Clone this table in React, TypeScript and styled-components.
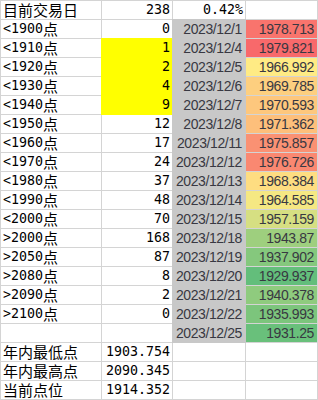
import React from 'react';
import styled, { createGlobalStyle, css } from 'styled-components';

const GRID = '#d4d4d4';
const GRAY = '#c8c8c8';
const YELLOW = '#ffff00';

type Row = { label: string; count: string; date: string; value: string; mark?: boolean };

const rows: Row[] = [
	{ label: '<1900点', count: '0', date: '2023/12/1', value: '1978.713' },
	{ label: '<1910点', count: '1', date: '2023/12/4', value: '1979.821', mark: true },
	{ label: '<1920点', count: '2', date: '2023/12/5', value: '1966.992', mark: true },
	{ label: '<1930点', count: '4', date: '2023/12/6', value: '1969.785', mark: true },
	{ label: '<1940点', count: '9', date: '2023/12/7', value: '1970.593', mark: true },
	{ label: '<1950点', count: '12', date: '2023/12/8', value: '1971.362' },
	{ label: '<1960点', count: '17', date: '2023/12/11', value: '1975.857' },
	{ label: '<1970点', count: '24', date: '2023/12/12', value: '1976.726' },
	{ label: '<1980点', count: '37', date: '2023/12/13', value: '1968.384' },
	{ label: '<1990点', count: '48', date: '2023/12/14', value: '1964.585' },
	{ label: '<2000点', count: '70', date: '2023/12/15', value: '1957.159' },
	{ label: '>2000点', count: '168', date: '2023/12/18', value: '1943.87' },
	{ label: '>2050点', count: '87', date: '2023/12/19', value: '1937.902' },
	{ label: '>2080点', count: '8', date: '2023/12/20', value: '1929.937' },
	{ label: '>2090点', count: '2', date: '2023/12/21', value: '1940.378' },
	{ label: '>2100点', count: '0', date: '2023/12/22', value: '1935.993' },
	{ label: '', count: '', date: '2023/12/25', value: '1931.25' },
];

const summary = [
	{ label: '年内最低点', value: '1903.754' },
	{ label: '年内最高点', value: '2090.345' },
	{ label: '当前点位', value: '1914.352' },
];

// excel 3色阶: 最小绿 / 中位数黄 / 最大红
const nums = rows.map((r) => parseFloat(r.value));
const sorted = [...nums].sort((a, b) => a - b);
const min = sorted[0];
const max = sorted[sorted.length - 1];
const mid = sorted[Math.floor(sorted.length / 2)];

const mix = (a: number[], b: number[], t: number) =>
	`rgb(${a.map((v, i) => Math.round(v + (b[i] - v) * t)).join(',')})`;

function scaleColor(v: number): string {
	const green = [99, 190, 123];
	const yellow = [255, 235, 132];
	const red = [248, 105, 107];
	if (v <= mid) return mix(green, yellow, (v - min) / (mid - min));
	return mix(yellow, red, (v - mid) / (max - mid));
}

// 拆开汉字和半角字符, 各用各的字体
function MixedText({ text }: { text: string }) {
	const parts = text.match(/[\u4e00-\u9fff]+|[^\u4e00-\u9fff]+/g) ?? [];
	return (
		<>
			{parts.map((p, i) => (/[\u4e00-\u9fff]/.test(p) ? <Han key={i}>{p}</Han> : <span key={i}>{p}</span>))}
		</>
	);
}

export default function App(): JSX.Element {
	return (
		<>
			<GlobalStyle />
			<Sheet>
				<Cell>
					<MixedText text="目前交易日" />
				</Cell>
				<Cell $align="right">238</Cell>
				<Cell $align="right">0.42%</Cell>
				<Cell />

				{rows.map((r) => (
					<React.Fragment key={r.date}>
						<Cell>
							<MixedText text={r.label} />
						</Cell>
						<Cell $align="right" $fill={r.mark ? YELLOW : undefined}>
							{r.count}
						</Cell>
						<Cell $align="right" $font="sans" $fill={GRAY}>
							{r.date}
						</Cell>
						<Cell $align="right" $font="sans" style={{ background: scaleColor(parseFloat(r.value)) }}>
							{r.value}
						</Cell>
					</React.Fragment>
				))}

				{summary.map((s) => (
					<React.Fragment key={s.label}>
						<Cell>
							<MixedText text={s.label} />
						</Cell>
						<Cell $align="right">{s.value}</Cell>
						<Cell />
						<Cell />
					</React.Fragment>
				))}
			</Sheet>
		</>
	);
}

const GlobalStyle = createGlobalStyle`
	html, body {
		margin: 0;
		padding: 0;
		background: #fff;
	}
`;

const Sheet = styled.div`
	display: grid;
	grid-template-columns: 101px 71px 73px 72px;
	grid-auto-rows: 19px;
	width: 318px;
	border-left: 1px solid ${GRID};
	border-top: 1px solid ${GRID};
	box-sizing: border-box;
`;

const Cell = styled.div<{ $align?: 'left' | 'right'; $fill?: string; $font?: 'mono' | 'sans' }>`
	box-sizing: border-box;
	display: flex;
	align-items: flex-end;
	justify-content: ${(p) => (p.$align === 'right' ? 'flex-end' : 'flex-start')};
	padding: 0 2px 1px 2px;
	border-right: 1px solid ${(p) => p.$fill ?? GRID};
	border-bottom: 1px solid ${(p) => p.$fill ?? GRID};
	background: ${(p) => p.$fill ?? '#fff'};
	white-space: nowrap;
	overflow: visible;
	${(p) =>
		p.$fill &&
		css`
			box-shadow: -1px -1px 0 ${p.$fill}, 0 -1px 0 ${p.$fill}, -1px 0 0 ${p.$fill};
		`}
	${(p) =>
		p.$font === 'sans'
			? css`
					font-family: 'Liberation Sans', Arial, sans-serif;
					font-size: 14px;
					letter-spacing: -0.4px;
					line-height: 16px;
					color: #383842;
					padding-right: 3px;
			  `
			: css`
					font-family: 'DejaVu Sans Mono', 'Noto Sans CJK SC', monospace;
					font-size: 13.3px;
					line-height: 16px;
					color: #000;
			  `}
`;

const Han = styled.span`
	font-family: 'Noto Sans CJK SC', sans-serif;
	font-size: 15px;
	line-height: 16px;
`;
